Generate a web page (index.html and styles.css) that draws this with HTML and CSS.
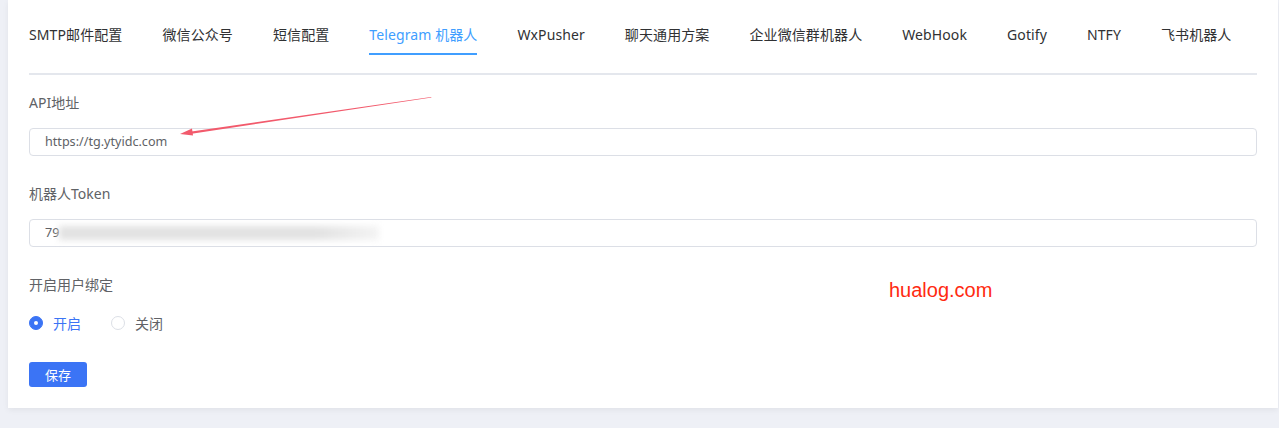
FILE: index.html
```html
<!DOCTYPE html>
<html lang="zh-CN">
  <head>
    <meta charset="UTF-8" />
    <meta name="viewport" content="width=device-width, initial-scale=1.0" />
    <title>通知配置</title>
    <link rel="stylesheet" href="styles.css">
  </head>
  <body>
    <div class="card">
      <nav class="tabs">
        <a class="tab">SMTP邮件配置</a>
        <a class="tab">微信公众号</a>
        <a class="tab">短信配置</a>
        <a class="tab active">Telegram 机器人</a>
        <a class="tab">WxPusher</a>
        <a class="tab">聊天通用方案</a>
        <a class="tab">企业微信群机器人</a>
        <a class="tab">WebHook</a>
        <a class="tab">Gotify</a>
        <a class="tab">NTFY</a>
        <a class="tab">飞书机器人</a>
      </nav>
      <div class="tabs-line"></div>

      <form class="form">
        <div class="form-item">
          <label class="form-label">API地址</label>
          <div class="input">https://tg.ytyidc.com</div>
        </div>

        <div class="form-item">
          <label class="form-label">机器人Token</label>
          <div class="input">79<span class="blur"></span></div>
        </div>

        <div class="form-item">
          <label class="form-label">开启用户绑定</label>
          <div class="radio-group">
            <span class="radio checked"><i class="radio-dot"></i>开启</span>
            <span class="radio"><i class="radio-dot"></i>关闭</span>
          </div>
        </div>

        <button type="button" class="btn-primary">保存</button>
      </form>
    </div>

    <svg class="arrow" width="260" height="44" viewBox="0 0 260 44">
      <polygon points="255,1 255.6,1.6 14,38 12,36" fill="#f25a6c" />
      <polygon points="4,38 16,32.6 17,39.6" fill="#f25a6c" />
    </svg>

    <div class="watermark">hualog.com</div>
  </body>
</html>
```

FILE: styles.css
```css
body {
  margin: 0;
  background-color: #eef0f6;
  font-family: "Noto Sans", "Noto Sans CJK SC", sans-serif;
  color: #303133;
  position: relative;
  height: 428px;
  overflow: hidden;
}

.card {
  margin: 0 1px 0 8px;
  padding: 15px 21px 21px;
  background-color: #fff;
  box-shadow: 0 2px 6px rgba(0, 0, 0, 0.06);
}

.tabs {
  display: flex;
}

.tab {
  height: 40px;
  line-height: 40px;
  padding: 0 20px;
  font-size: 14px;
  letter-spacing: 0.1px;
  color: #303133;
  cursor: pointer;
  white-space: nowrap;
  position: relative;
}
.tab:first-child {
  padding-left: 0;
}

.tab.active {
  color: #409eff;
}
.tab.active::after {
  content: '';
  position: absolute;
  left: 20px;
  right: 20px;
  bottom: 0;
  height: 2px;
  background-color: #409eff;
}

.tabs-line {
  margin-top: 18px;
  height: 2px;
  background-color: #e4e7ed;
}

.form {
  padding-top: 18px;
}

.form-item {
  margin-bottom: 28px;
}

.form-label {
  display: block;
  height: 20px;
  line-height: 20px;
  font-size: 14px;
  color: #606266;
  margin-bottom: 15px;
}

.input {
  height: 26px;
  line-height: 26px;
  border: 1px solid #dcdfe6;
  border-radius: 4px;
  padding: 0 15px;
  font-size: 12.6px;
  color: #606266;
  display: flex;
  align-items: center;
}

.blur {
  display: inline-block;
  width: 320px;
  height: 14px;
  background: linear-gradient(to right, #e2e2e2 80%, #f4f4f4);
  filter: blur(3px);
}

.radio-group {
  display: flex;
  gap: 30px;
  height: 20px;
  align-items: center;
  margin-top: 18px;
}

.radio {
  display: flex;
  align-items: center;
  gap: 10px;
  font-size: 14px;
  color: #606266;
}

.radio-dot {
  width: 12px;
  height: 12px;
  border: 1px solid #dcdfe6;
  border-radius: 50%;
  box-sizing: content-box;
  position: relative;
}

.radio.checked {
  color: #3b74f5;
}
.radio.checked .radio-dot {
  background-color: #3b74f5;
  border-color: #3b74f5;
}
.radio.checked .radio-dot::after {
  content: '';
  position: absolute;
  left: 4px;
  top: 4px;
  width: 4px;
  height: 4px;
  border-radius: 50%;
  background-color: #fff;
}

.btn-primary {
  margin-top: 1px;
  width: 58px;
  height: 25px;
  border: none;
  border-radius: 3px;
  background-color: #3b74f5;
  color: #fff;
  font-family: inherit;
  font-size: 13px;
  padding: 0;
  cursor: pointer;
}

.arrow {
  position: absolute;
  left: 176px;
  top: 96px;
}

.watermark {
  position: absolute;
  left: 889px;
  top: 279px;
  font-size: 20px;
  color: #ff2a10;
  font-family: "Liberation Sans", sans-serif;
}
```
